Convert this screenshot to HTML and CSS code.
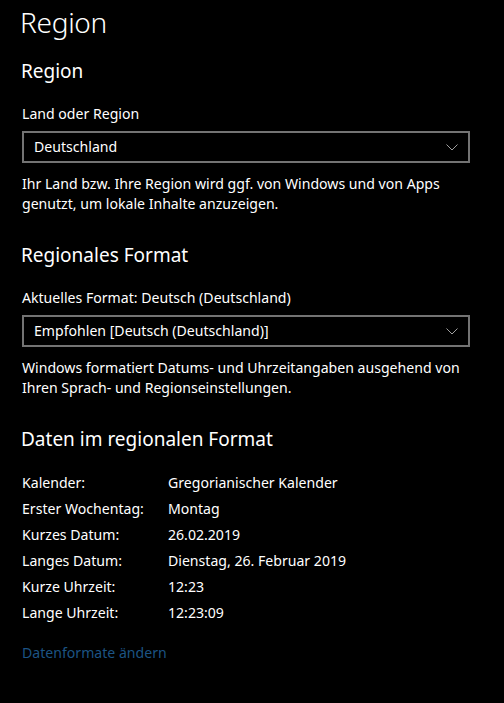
FILE: index.html
```html
<!DOCTYPE html>
<html lang="de">
<head>
<meta charset="utf-8">
<link rel="stylesheet" href="styles.css">
</head>
<body>
<main class="page">
  <h1 class="title">Region</h1>

  <section class="section">
    <h2 class="heading">Region</h2>
    <div class="label">Land oder Region</div>
    <div class="select">
      <span class="select-text">Deutschland</span>
      <svg class="chevron" width="12" height="7" viewBox="0 0 12 7"><path d="M0.5 0.5 L6 6 L11.5 0.5" fill="none" stroke="#a0a0a0" stroke-width="1"/></svg>
    </div>
    <p class="desc">Ihr Land bzw. Ihre Region wird ggf. von Windows und von Apps genutzt, um lokale Inhalte anzuzeigen.</p>
  </section>

  <section class="section">
    <h2 class="heading">Regionales Format</h2>
    <div class="label">Aktuelles Format: Deutsch (Deutschland)</div>
    <div class="select">
      <span class="select-text">Empfohlen [Deutsch (Deutschland)]</span>
      <svg class="chevron" width="12" height="7" viewBox="0 0 12 7"><path d="M0.5 0.5 L6 6 L11.5 0.5" fill="none" stroke="#a0a0a0" stroke-width="1"/></svg>
    </div>
    <p class="desc">Windows formatiert Datums- und Uhrzeitangaben ausgehend von Ihren Sprach- und Regionseinstellungen.</p>
  </section>

  <section class="section">
    <h2 class="heading">Daten im regionalen Format</h2>
    <dl class="data">
      <dt>Kalender:</dt><dd>Gregorianischer Kalender</dd>
      <dt>Erster Wochentag:</dt><dd>Montag</dd>
      <dt>Kurzes Datum:</dt><dd>26.02.2019</dd>
      <dt>Langes Datum:</dt><dd>Dienstag, 26. Februar 2019</dd>
      <dt>Kurze Uhrzeit:</dt><dd>12:23</dd>
      <dt>Lange Uhrzeit:</dt><dd>12:23:09</dd>
    </dl>
    <a class="link" href="#">Datenformate ändern</a>
  </section>
</main>
</body>
</html>
```
FILE: styles.css
```css
html, body {
  margin: 0;
  padding: 0;
  background: #000;
}
body {
  color: #fff;
  font-family: "Noto Sans", "Open Sans", sans-serif;
  font-size: 14.1px;
  height: 703px;
  overflow: hidden;
}
.page {
  padding: 0 35px 0 22px;
}
.title {
  margin: 0 0 0 -2px;
  font-size: 28px;
  font-weight: 300;
  line-height: 44px;
  letter-spacing: -0.3px;
}
.section {
  margin: 0;
}
.heading {
  margin: 12px 0 0 -1px;
  font-size: 19px;
  font-weight: 400;
  line-height: 30px;
}
.section + .section .heading {
  margin-top: 26px;
}
.label {
  margin-top: 18px;
  line-height: 20px;
}
.select {
  box-sizing: border-box;
  margin-top: 7px;
  width: 448px;
  height: 32px;
  border: 2px solid #737373;
  display: flex;
  align-items: center;
  justify-content: space-between;
  padding: 0 10px 0 10px;
}
.select-text {
  line-height: 20px;
}
.chevron {
  display: block;
}
.desc {
  margin: 11px 0 0 0;
  line-height: 20px;
}
.data {
  display: grid;
  grid-template-columns: 146px 1fr;
  grid-auto-rows: 26px;
  align-items: center;
  margin: 16px 0 0 0;
}
.data dt, .data dd {
  margin: 0;
  line-height: 20px;
}
.link {
  display: block;
  margin-top: 17px;
  color: #1c5484;
  text-decoration: none;
  line-height: 20px;
}
```
